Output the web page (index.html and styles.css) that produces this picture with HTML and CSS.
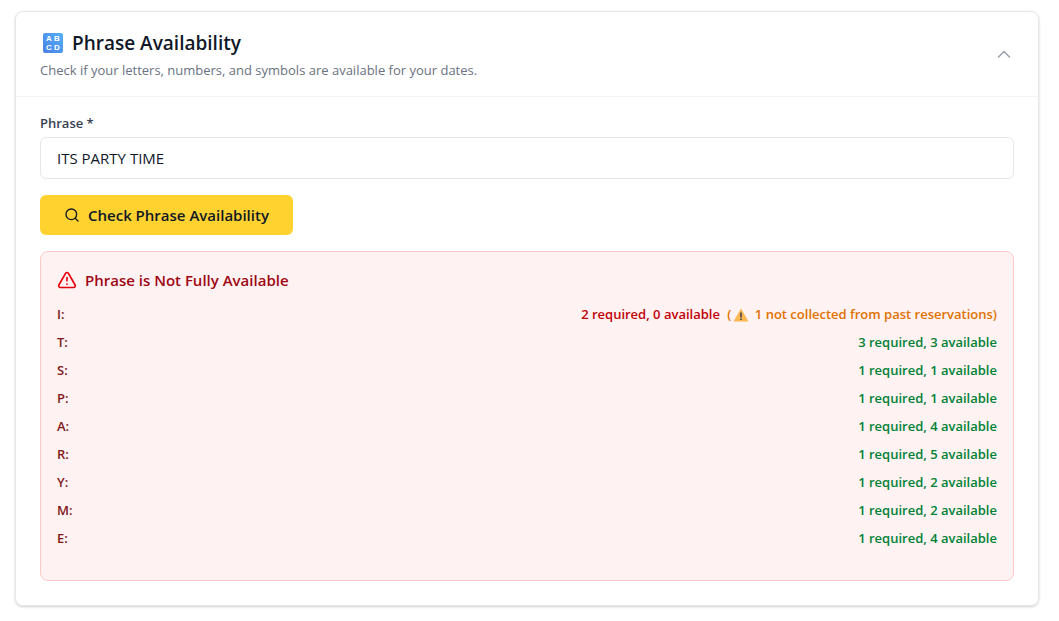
FILE: index.html
```html
<!DOCTYPE html>
<html lang="en">
<head>
    <meta charset="UTF-8">
    <meta name="viewport" content="width=device-width, initial-scale=1.0">
    <title>Phrase Availability</title>
    <link rel="stylesheet" href="styles.css">
</head>
<body>
    <section class="card">
        <header class="card-header">
            <div>
                <h2 class="title">
                    <svg class="title-icon" viewBox="0 0 22 22" aria-hidden="true">
                        <defs>
                            <linearGradient id="tile" x1="1" y1="0" x2="0" y2="1">
                                <stop offset="0" stop-color="#55b0f8"/>
                                <stop offset="1" stop-color="#4a7fe6"/>
                            </linearGradient>
                        </defs>
                        <rect x="1" y="1" width="20" height="20" rx="2" fill="url(#tile)"/>
                        <g class="tile-letters">
                            <text x="7" y="9">A</text>
                            <text x="15" y="9">B</text>
                            <text x="7" y="18">C</text>
                            <text x="15" y="18">D</text>
                        </g>
                    </svg>
                    Phrase Availability
                </h2>
                <p class="subtitle">Check if your letters, numbers, and symbols are available for your dates.</p>
            </div>
            <button type="button" class="toggle" aria-label="Collapse">
                <svg viewBox="0 0 20 20" width="20" height="20"><path d="M4.5 12 10 6.500l5.500 5.500"/></svg>
            </button>
        </header>

        <form class="card-body">
            <label class="label" for="phrase">Phrase *</label>
            <input type="text" class="input" id="phrase" value="ITS PARTY TIME">
            <button type="button" class="check">
                <svg viewBox="0 0 24 24" width="16" height="16"><circle cx="11" cy="11" r="8"/><path d="m21 21-4.300-4.300"/></svg>
                Check Phrase Availability
            </button>

            <div class="result">
                <h3 class="result-title">
                    <svg viewBox="0 0 24 24" width="20" height="20"><path d="m21.730 18-8-14a2 2 0 0 0-3.480 0l-8 14A2 2 0 0 0 4 21h16a2 2 0 0 0 1.730-3Z"/><path d="M12 9v4M12 17h.010"/></svg>
                    Phrase is Not Fully Available
                </h3>
                <ul class="letters">
                    <li>
                        <span>I:</span>
                        <span class="missing">2 required, 0 available
                            <span class="note">(<svg class="warning" viewBox="0 0 16 14" aria-hidden="true"><path d="M8 .5 15.500 13.500H.5Z" fill="#fcb750"/><path d="M7.200 4.500h1.600v5H7.200zM7.200 10.500h1.600v1.600H7.200z" fill="#454347"/></svg> 1 not collected from past reservations)</span>
                        </span>
                    </li>
                    <li><span>T:</span><span class="enough">3 required, 3 available</span></li>
                    <li><span>S:</span><span class="enough">1 required, 1 available</span></li>
                    <li><span>P:</span><span class="enough">1 required, 1 available</span></li>
                    <li><span>A:</span><span class="enough">1 required, 4 available</span></li>
                    <li><span>R:</span><span class="enough">1 required, 5 available</span></li>
                    <li><span>Y:</span><span class="enough">1 required, 2 available</span></li>
                    <li><span>M:</span><span class="enough">1 required, 2 available</span></li>
                    <li><span>E:</span><span class="enough">1 required, 4 available</span></li>
                </ul>
            </div>
        </form>
    </section>
</body>
</html>
```
FILE: styles.css
```css
* {
    box-sizing: border-box;
}
body {
    margin: 0;
    padding: 11px 20px 15px 15px;
    background: #fff;
    font-family: "Open Sans", "Noto Sans", sans-serif;
    font-size: 13px;
    line-height: 20px;
    color: #101828;
}
h2, h3, p, ul {
    margin: 0;
    padding: 0;
}
svg {
    flex-shrink: 0;
    fill: none;
    stroke: currentColor;
    stroke-width: 2;
    stroke-linecap: round;
    stroke-linejoin: round;
}
button {
    border: none;
    font-family: inherit;
    cursor: pointer;
}
.card {
    border: 1px solid #e5e7eb;
    border-radius: 8px;
    box-shadow: 0 1px 3px rgba(0, 0, 0, 0.1), 0 1px 2px rgba(0, 0, 0, 0.1);
}
.card-header {
    display: flex;
    justify-content: space-between;
    align-items: center;
    padding: 17px 24px 16px;
    border-bottom: 1px solid #f3f4f6;
}
.title {
    display: flex;
    align-items: center;
    gap: 8px;
    padding-left: 2px;
    font-size: 19px;
    line-height: 28px;
    font-weight: 600;
}
.title-icon {
    width: 22px;
    height: 22px;
    stroke: none;
}
.tile-letters {
    fill: #fff;
    font-family: "Liberation Sans", Arial, sans-serif;
    font-size: 8px;
    font-weight: 700;
    text-anchor: middle;
}
.subtitle {
    margin-top: 3px;
    color: #6a7282;
}
.toggle {
    display: flex;
    padding: 0;
    background: none;
    color: #99a1af;
}
.toggle svg {
    stroke-width: 1.5;
}
.card-body {
    padding: 16px 24px 24px;
}
.label {
    display: block;
    margin-bottom: 4px;
    font-weight: 600;
    color: #364153;
}
.input {
    display: block;
    width: 100%;
    height: 42px;
    padding: 0 16px;
    border: 1px solid #e5e7eb;
    border-radius: 6px;
    font-family: inherit;
    font-size: 15px;
    color: #101828;
}
.check {
    display: flex;
    align-items: center;
    gap: 8px;
    height: 40px;
    margin: 16px 0;
    padding: 0 24px;
    border-radius: 6px;
    background: #ffd230;
    font-size: 15px;
    font-weight: 600;
    color: #101828;
}
.result {
    padding: 16px 16px 32px;
    border: 1px solid #ffc9c9;
    border-radius: 8px;
    background: #fef2f2;
}
.result-title {
    display: flex;
    align-items: center;
    gap: 8px;
    margin-bottom: 12px;
    font-size: 15px;
    line-height: 24px;
    font-weight: 600;
    color: #9f0712;
}
.result-title svg {
    color: #e7000b;
}
.letters {
    display: flex;
    flex-direction: column;
    gap: 8px;
    list-style: none;
    font-weight: 600;
    color: #82181a;
}
.letters li {
    display: flex;
    justify-content: space-between;
}
.missing {
    color: #c10007;
}
.note {
    margin-left: 4px;
    color: #e17100;
}
.enough {
    color: #008236;
}
.warning {
    width: 16px;
    height: 14px;
    margin: 0 2px;
    vertical-align: -3px;
    stroke: none;
}
```
